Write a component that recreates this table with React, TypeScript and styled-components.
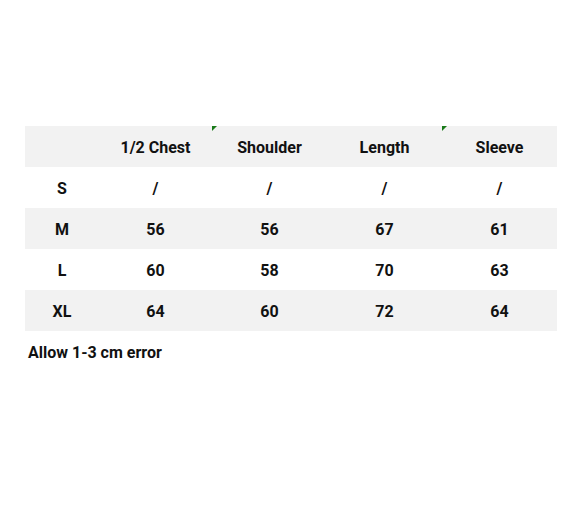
import styled, { createGlobalStyle } from "styled-components";

const Global = createGlobalStyle`
  html, body {
    margin: 0;
    padding: 0;
    background: #fff;
  }
  body {
    font-family: Roboto, "DejaVu Sans", sans-serif;
    color: #111;
  }
`;

const Page = styled.div`
  width: 578px;
  height: 505px;
  padding: 126px 21px 0 25px;
  box-sizing: border-box;
`;

const Table = styled.div`
  display: grid;
  grid-template-columns: 74px 113px 115px 115px 115px;
  width: 532px;
`;

const Row = styled.div<{ $shade?: boolean }>`
  display: contents;
  & > div {
    background: ${(p) => (p.$shade ? "#f2f2f2" : "#fff")};
  }
`;

const Cell = styled.div<{ $flag?: boolean }>`
  position: relative;
  height: 41px;
  padding-top: 2px;
  box-sizing: border-box;
  display: flex;
  align-items: center;
  justify-content: center;
  font-size: 16px;
  font-weight: 700;
  ${(p) =>
    p.$flag &&
    `
    &::before {
      content: "";
      position: absolute;
      left: 0;
      top: 0;
      border-top: 5px solid #1a7a1a;
      border-right: 5px solid transparent;
    }
  `}
`;

const Note = styled.p`
  margin: 12px 0 0 3px;
  font-size: 16px;
  font-weight: 700;
`;

const header = ["", "1/2 Chest", "Shoulder", "Length", "Sleeve"];
const rows = [
  ["S", "/", "/", "/", "/"],
  ["M", "56", "56", "67", "61"],
  ["L", "60", "58", "70", "63"],
  ["XL", "64", "60", "72", "64"],
];

export default function App() {
  return (
    <>
      <Global />
      <Page>
        <Table>
          <Row $shade>
            {header.map((h, i) => (
              <Cell key={i} $flag={i === 2 || i === 4}>
                {h}
              </Cell>
            ))}
          </Row>
          {rows.map((r, ri) => (
            <Row key={ri} $shade={ri % 2 === 1}>
              {r.map((v, ci) => (
                <Cell key={ci}>{v}</Cell>
              ))}
            </Row>
          ))}
        </Table>
        <Note>Allow 1-3 cm error</Note>
      </Page>
    </>
  );
}
